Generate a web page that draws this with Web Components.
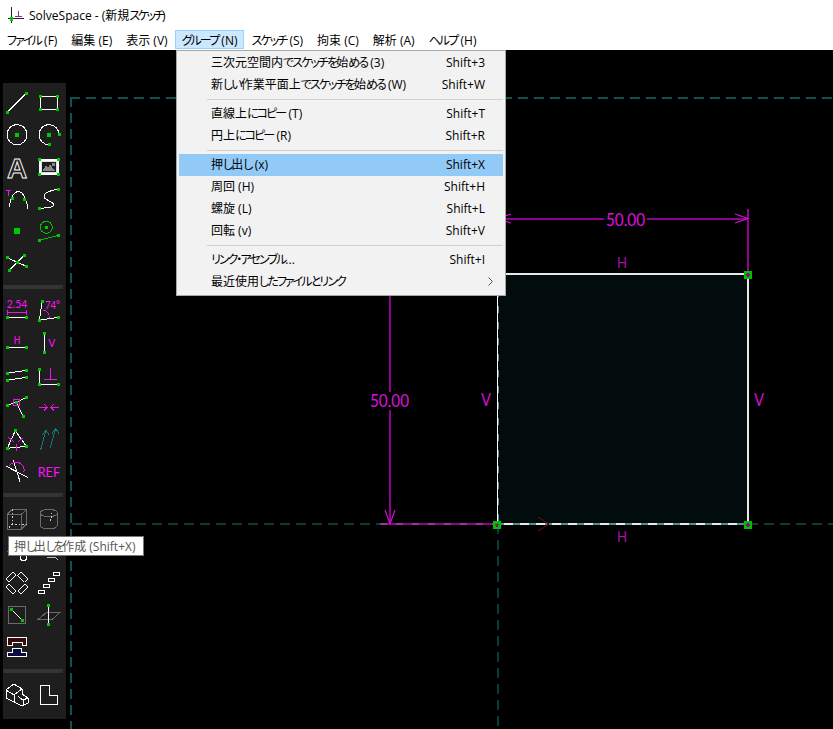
<!DOCTYPE html>
<html lang="ja">
<head>
<meta charset="utf-8">
<title>SolveSpace</title>
<style>
  html, body { margin: 0; height: 100%; background: #000; }
  body { font-family: "Open Sans", "Noto Sans CJK JP", sans-serif; font-size: 12px; }
  /* the reference font has much narrower kana than Noto */
  .k { letter-spacing: -1.9px; }
  .n { letter-spacing: -5.5px; }
  menu-item .n { letter-spacing: -3.4px; }
  title-bar .k, tool-tip .k { letter-spacing: -2.4px; }
</style>
</head>
<body>
<solve-window>
  <title-bar slot="title">SolveSpace - (新規スケッチ)</title-bar>
  <menu-bar slot="menu">
    <menu-item>ファイル (F)</menu-item>
    <menu-item>編集 (E)</menu-item>
    <menu-item>表示 (V)</menu-item>
    <menu-item active>グループ (N)</menu-item>
    <menu-item>スケッチ (S)</menu-item>
    <menu-item>拘束 (C)</menu-item>
    <menu-item>解析 (A)</menu-item>
    <menu-item>ヘルプ (H)</menu-item>
  </menu-bar>
  <sketch-canvas slot="canvas"></sketch-canvas>
  <tool-palette slot="canvas"></tool-palette>
  <tool-tip slot="canvas">押し出しを作成 (Shift+X)</tool-tip>
  <drop-menu slot="canvas">
    <drop-row shortcut="Shift+3">三次元空間内でスケッチを始める (3)</drop-row>
    <drop-row shortcut="Shift+W">新しい作業平面上でスケッチを始める (W)</drop-row>
    <drop-sep></drop-sep>
    <drop-row shortcut="Shift+T">直線上にコピー (T)</drop-row>
    <drop-row shortcut="Shift+R">円上にコピー (R)</drop-row>
    <drop-sep></drop-sep>
    <drop-row shortcut="Shift+X" selected>押し出し (x)</drop-row>
    <drop-row shortcut="Shift+H">周回 (H)</drop-row>
    <drop-row shortcut="Shift+L">螺旋 (L)</drop-row>
    <drop-row shortcut="Shift+V">回転 (v)</drop-row>
    <drop-sep></drop-sep>
    <drop-row shortcut="Shift+I">リンク・アセンブル...</drop-row>
    <drop-row submenu>最近使用したファイルとリンク</drop-row>
  </drop-menu>
</solve-window>

<script>
/********************* Kana width *********************/
const narrowKana = (el) => {
  el.innerHTML = el.textContent.replace(/[ーコピ]+|[\u3040-\u30ff]+/g, (run) => {
    const cls = /^[ーコピ]/.test(run) ? "n" : "k";
    return `<span class="${cls}">${run}</span>`;
  });
};
document.querySelectorAll("title-bar, menu-item, drop-row, tool-tip").forEach(narrowKana);

/********************* Base *********************/
class ShadowEl extends HTMLElement {
  constructor() {
    super();
    this.attachShadow({ mode: "open" });
  }
  connectedCallback() {
    this.shadowRoot.innerHTML = this.render();
  }
}

/********************* Window *********************/
class SolveWindow extends ShadowEl {
  render() {
    return `
    <style>
      :host { display: flex; flex-direction: column; width: 833px; height: 729px; overflow: hidden; }
      .canvas { position: relative; flex: 1; background: #000; }
    </style>
    <slot name="title"></slot>
    <slot name="menu"></slot>
    <div class="canvas"><slot name="canvas"></slot></div>`;
  }
}

class TitleBar extends ShadowEl {
  render() {
    return `
    <style>
      :host {
        display: flex; align-items: center; gap: 5px; height: 30px; padding-left: 8px;
        background: #fff; color: #000; font-feature-settings: "palt";
      }
      svg { display: block; width: 16px; height: 18px; }
    </style>
    <svg viewBox="0 0 16 18" shape-rendering="crispEdges">
      <path d="M3.5 1V17M0 12.5H16" stroke="#222" fill="none"/>
      <path d="M10.5 5V10.5M7 10.5H14" stroke="#a020a0" fill="none"/>
      <rect x="1.5" y="11" width="3.5" height="3.5" fill="#0c0"/>
    </svg>
    <span><slot></slot></span>`;
  }
}

class MenuBar extends ShadowEl {
  render() {
    return `
    <style>
      :host { display: flex; height: 20px; background: #fff; font-feature-settings: "palt"; }
    </style>
    <slot></slot>`;
  }
}

class MenuItem extends ShadowEl {
  render() {
    return `
    <style>
      :host {
        display: flex; align-items: center; box-sizing: border-box; height: 19px;
        padding: 0 7px; border: 1px solid transparent; border-width: 1px 0; color: #000;
      }
      :host([active]) { background: #cce8ff; border: 1px solid #99d1ff; padding: 0 6px; }
    </style>
    <span><slot></slot></span>`;
  }
}

/********************* Drop down menu *********************/
class DropMenu extends ShadowEl {
  render() {
    return `
    <style>
      :host {
        position: absolute; left: 176px; top: 0; box-sizing: border-box; width: 330px; height: 246px;
        display: block; padding: 1px 2px 2px; background: #f2f2f2; border: 1px solid #a8a8a8;
        color: #000; font-feature-settings: "palt";
      }
    </style>
    <slot></slot>`;
  }
}

class DropRow extends ShadowEl {
  render() {
    const shortcut = this.getAttribute("shortcut") || "";
    const chevron = this.hasAttribute("submenu")
      ? `<svg class="chevron" width="5" height="9" viewBox="0 0 5 9"><path d="M.5 .5L4.5 4.5L.5 8.5" fill="none" stroke="#555"/></svg>`
      : "";
    return `
    <style>
      :host {
        display: flex; align-items: center; justify-content: space-between; box-sizing: border-box;
        position: relative; height: 22px; padding: 0 18px 2px 32px;
      }
      :host([selected]) { background: #91c9f7; }
      .chevron { position: absolute; right: 10px; top: 6px; }
    </style>
    <span><slot></slot></span><span>${shortcut}</span>${chevron}`;
  }
}

class DropSep extends ShadowEl {
  render() {
    return `
    <style>
      :host { display: flex; align-items: center; height: 7px; padding-left: 28px; }
      div { flex: 1; height: 1px; background: #d0d0d0; }
    </style>
    <div></div>`;
  }
}

class ToolTip extends ShadowEl {
  render() {
    return `
    <style>
      :host {
        position: absolute; left: 8px; top: 486px; box-sizing: border-box; width: 136px; height: 20px;
        display: flex; align-items: center; padding-left: 5px; white-space: nowrap;
        background: #fff; border: 1px solid #767676; color: #575757; font-feature-settings: "palt";
      }
    </style>
    <span><slot></slot></span>`;
  }
}

/********************* Sketch *********************/
class SketchCanvas extends ShadowEl {
  render() {
    return `
    <style>
      :host { position: absolute; inset: 0; display: block; }
      svg { display: block; }
      text { font-family: Lato, "Liberation Sans", sans-serif; font-weight: 400; }
      .dim { fill: #e010e0; font-size: 18px; }
      .lab { fill: #a810a8; font-size: 16px; }
      .lab.v { fill: #d010d0; font-size: 18px; }
    </style>
    <svg width="833" height="679" viewBox="0 50 833 679" shape-rendering="crispEdges">
      <!-- workplane -->
      <g fill="none" stroke-width="2" stroke-dasharray="10 6">
        <path d="M70 97.5H833M71 97V729" stroke="#0b5450"/>
        <path d="M72 524H380M748 524H833M498 524V729" stroke="#063c3c"/>
      </g>
      <rect x="497" y="274" width="251" height="250" fill="#020c0d"/>
      <!-- entities -->
      <path d="M497 274H748V524H497" fill="none" stroke="#e8e8e8" stroke-width="2"/>
      <path d="M497.5 274V524" fill="none" stroke="#fff"/>
      <path d="M498.5 274V524" fill="none" stroke="#4a9090" stroke-dasharray="7 9"/>
      <path d="M497 524H748" fill="none" stroke="#4a9090" stroke-width="2" stroke-dasharray="7 9"/>
      <path d="M538 517L549 524L538 531" fill="none" stroke="#5a0c0c"/>
      <!-- dimensions -->
      <g stroke="#8b048b" stroke-width="2" fill="none">
        <path d="M500 218.5H604M647 218.5H748M748 209V274"/>
        <path d="M380 524H497"/>
        <path d="M390 296V392M390 410V524"/>
      </g>
      <path d="M380 524H497" stroke="#9a359a" stroke-width="2" stroke-dasharray="7 9"/>
      <g stroke="#d010d0" stroke-width="1.2" fill="none" shape-rendering="auto">
        <path d="M735 214L748 218.5L735 223M511 214L497 218.5L511 223M385 510L390 524L395 510"/>
      </g>
      <text class="dim" x="606" y="226" textLength="39" lengthAdjust="spacingAndGlyphs">50.00</text>
      <text class="dim" x="370" y="407" textLength="39" lengthAdjust="spacingAndGlyphs">50.00</text>
      <text class="lab" x="617" y="268" textLength="10" lengthAdjust="spacingAndGlyphs">H</text>
      <text class="lab" x="617" y="542" textLength="10" lengthAdjust="spacingAndGlyphs">H</text>
      <text class="lab v" x="481" y="406" textLength="10" lengthAdjust="spacingAndGlyphs">V</text>
      <text class="lab v" x="754" y="406" textLength="10" lengthAdjust="spacingAndGlyphs">V</text>
      <!-- points -->
      <g fill="#00c000">
        <rect x="744" y="271" width="8" height="8"/>
        <rect x="744" y="521" width="8" height="8"/>
        <rect x="493" y="521" width="8" height="8"/>
      </g>
      <g fill="#8b048b">
        <path d="M746 274H750V276H746ZM747 273H749V277H747Z"/>
        <path d="M746 524H750V526H746ZM747 523H749V527H747Z"/>
        <path d="M495 524H499V525H495ZM496 525H498V527H496Z"/>
      </g>
    </svg>`;
  }
}

/********************* Tool palette *********************/
const pt = (x, y, s = 3) => `<rect x="${x - s / 2}" y="${y - s / 2}" width="${s}" height="${s}" fill="#00c800" stroke="none"/>`;
const txt = (x, y, size, len, str) => `<text x="${x}" y="${y}" font-size="${size}" textLength="${len}" lengthAdjust="spacingAndGlyphs" fill="#ff10ff" stroke="none">${str}</text>`;
const mag = (d) => `<path d="${d}" stroke="#f010f0"/>`;

const SECTIONS = [
  [
    `<path d="M4.3 23.3L23.3 4.3"/>${pt(4.3, 23.3)}${pt(23.3, 4.3)}`,
    `<path d="M5.3 7H22.3V20.3H5.3Z"/>${pt(5.3, 7)}${pt(22.3, 7)}${pt(5.3, 20.3)}${pt(22.3, 20.3)}`,
    `<circle cx="14" cy="13.7" r="10"/>${pt(14, 13.7, 4)}`,
    `<path d="M24 13.7A10 10 0 1 0 14.3 23.7"/>${pt(14, 13.7, 4)}${pt(24, 13.7)}${pt(14.3, 23.7)}`,
    `<text x="14" y="24.5" text-anchor="middle" font-size="28" style="font-family:'Liberation Sans',sans-serif;font-weight:700" fill="#1e1e1e" stroke="#fff" stroke-width=".9">A</text>`,
    `<path d="M4.8 6.8H22.8V20.8H4.8Z" stroke-width="1.5"/><path d="M6.5 8.5H21V19H6.5Z" stroke="#ddd"/><path d="M7.5 18L11 12L13 15L15 11L20 18Z" fill="#888" stroke="none"/><rect x="17" y="9.5" width="3" height="3" fill="#888" stroke="none"/>${pt(4.3, 6.3)}${pt(23.3, 6.3)}${pt(4.3, 21.3)}${pt(23.3, 21.3)}`,
    `<path d="M6 22.3C7.5 14 10 6.7 15.3 6.7C20.5 6.7 23.5 15 25 24.3"/>${pt(9.3, 13.3)}${pt(21.3, 14.3)}<path d="M3 5.5H8M5.5 5.5V10.5" stroke="#f010f0"/>`,
    `<path d="M4.3 23.3C10 23 19 23 18.5 19.5C18 16 8 15 9 11C10 6 18 5 23.3 4.3"/>${pt(4.3, 23.3)}${pt(23.3, 4.3)}`,
    `${pt(14, 13.7, 6)}`,
    `<circle cx="11.3" cy="10.3" r="6" stroke="#00c000"/><path d="M4.3 23.3L23.3 18.3" stroke="#00c000"/>${pt(11.3, 10.3)}${pt(4.3, 23.3)}${pt(23.3, 18.3)}`,
    `<path d="M4.3 8.7L23.3 17.3M6.3 21.3L21.3 6.3"/>${pt(4.3, 8.7)}${pt(23.3, 17.3)}${pt(6.3, 21.3)}${pt(21.3, 6.3)}${pt(14.3, 13.7)}`,
    ``,
  ],
  [
    `${txt(3.7, 11, 10.5, 20.5, "2.54")}${mag("M4.3 15.3H23.3M4.3 12.5V18M23.3 12.5V18")}<path d="M4.3 20.3H23.3"/>${pt(4.3, 20.3)}${pt(23.3, 20.3)}`,
    `${txt(10, 11.5, 10.5, 15, "74°")}<path d="M7.3 4L4.3 23.3L23.3 20.3"/>${mag("M8.3 13C12 13.5 14.5 17 14.3 21.3")}${pt(7.3, 4)}${pt(4.3, 23.3)}${pt(23.3, 20.3)}`,
    `${txt(10.8, 15, 11, 6.6, "H")}<path d="M4.3 18.3H23.3"/>${pt(4.3, 18.3)}${pt(23.3, 18.3)}`,
    `${txt(13.2, 17.7, 12, 7, "V")}<path d="M9.3 4.3V23.3"/>${pt(9.3, 4.3)}${pt(9.3, 23.3)}`,
    `<path d="M4.3 12.3L23.3 9.3M4.3 19.3L23.3 16.3"/>${pt(4.3, 12.3)}${pt(23.3, 9.3)}${pt(4.3, 19.3)}${pt(23.3, 16.3)}`,
    `<path d="M4.3 8.3V23.3H23.3"/>${mag("M15.7 7.3V18.3M9.3 18.3H22.3")}${pt(4.3, 8.3)}${pt(4.3, 23.3)}${pt(23.3, 23.3)}`,
    `<path d="M4.3 12.3L13.3 9.3L23.3 4.3M13.3 9.3L20.3 23.3"/>${mag("M10.3 6.3H16.3V12.3H10.3Z")}${pt(4.3, 12.3)}${pt(23.3, 4.3)}${pt(20.3, 23.3)}${pt(13.3, 9.3)}`,
    `${mag("M4.3 14.3H12.3M9 11L12.3 14.3L9 17.6M24 14.3H16M19.3 11L16 14.3L19.3 17.6")}`,
    `<path d="M12.3 5.7L4.3 23.3L23.3 21.3Z"/>${mag("M5.5 12.5L11 16.5M15 16.5L20.5 12.5M13.8 19V25.5")}${pt(12.3, 5.7)}${pt(4.3, 23.3)}${pt(23.3, 21.3)}`,
    `<path d="M5.7 24.7L11 5M7.5 10L11 5L14 10M15 23.3L20.7 3.3M17 8.5L20.7 3.3L24 8.5" stroke="#0f7a78"/>`,
    `<path d="M3 9L25 20.7M10.3 3L17 24.7"/>${mag("M6.3 9A8 8 0 0 1 21 14.7")}`,
    `${txt(2.7, 19.7, 14, 22.4, "REF")}`,
  ],
  [
    `<path d="M4.3 9H18.7V24H4.3ZM4.3 9L9.5 4.3H23.7V19L18.7 24M18.7 9L23.7 4.3" stroke="#6a6a6a"/><path d="M9.5 4.3V19H23.7M9.5 19L4.3 24" stroke="#d0d0d0" stroke-dasharray="1.5 2"/>`,
    `<ellipse cx="13.7" cy="8" rx="8.7" ry="3.7" stroke="#6a6a6a"/><path d="M5 8V20.3C5 22.4 9 24 13.7 24C18.4 24 22.3 22.4 22.3 20.3V8" stroke="#6a6a6a"/><path d="M16 8C19 10 15 14 14.5 18" stroke="#d0d0d0" stroke-dasharray="1.5 2"/>`,
    `<circle cx="20.5" cy="20.5" r="3"/><path d="M4 14H7" stroke="#6a6a6a"/>`,
    `<path d="M12 20H20L23 23M23 14V18" stroke="#bbb"/>`,
    `<g transform="translate(8 8.3) rotate(-45)"><rect x="-5" y="-2.2" width="10" height="4.4"/></g><g transform="translate(19.7 8.3) rotate(45)"><rect x="-5" y="-2.2" width="10" height="4.4"/></g><g transform="translate(8 20) rotate(45)"><rect x="-5" y="-2.2" width="10" height="4.4"/></g><g transform="translate(19.7 20) rotate(-45)"><rect x="-5" y="-2.2" width="10" height="4.4"/></g>`,
    `<path d="M3 21.3H9.7V24.7H3ZM8.3 15.3H14.3V18.7H8.3ZM13.3 9.3H19.3V12.7H13.3ZM18.3 3.3H24.7V6.7H18.3Z"/>`,
    `<path d="M5.3 5.3H22.7V22.3H5.3Z" stroke="#6a6a6a"/><path d="M8.3 8.3L19.7 19.7"/>${pt(8.3, 8.3)}${pt(19.7, 19.7)}`,
    `<path d="M3.3 18.3L11.7 11.3H25L17.3 18.3Z" stroke="#6a6a6a"/><path d="M13.3 4.3V23.3"/>${pt(13.3, 4.3)}${pt(13.3, 23.3)}`,
    `<path d="M4.3 12.7V4.3H23.7V12.7H19V9H9V12.7Z" fill="#3c0808"/><path d="M4.3 23.7V19.5H9.5V15.3H18.5V19.5H23.7V23.7Z" fill="#0a0a40"/>`,
    ``,
  ],
  [
    `<path d="M3 9L11 3L19 8V13L25 17V22L19 25L3 17ZM3 9L11 14L19 8M11 14V21M15 15.5L20 19L25 17M20 19V25"/>`,
    `<path d="M5.3 4.7H14.3V14.7H22.7V23.7H5.3Z"/>`,
  ],
];

class ToolPalette extends ShadowEl {
  render() {
    const cell = (icon) => `<svg viewBox="0 0 28 28" width="28" height="28" fill="none" stroke="#fff" overflow="visible" shape-rendering="crispEdges">${icon}</svg>`;
    const groups = SECTIONS.map((icons) => `<div class="grid">${icons.map(cell).join("")}</div>`);
    return `
    <style>
      :host {
        position: absolute; left: 3px; top: 33px; display: flex; flex-direction: column;
        box-sizing: border-box; width: 63px; height: 636px; padding: 6px 3px 10px 0; background: #1e1e1e;
      }
      .grid { display: grid; grid-template-columns: 28px 28px; column-gap: 4px; row-gap: 4px; }
      .sep { height: 4px; margin: 8px 0; background: #333; }
      svg { display: block; }
      text { font-family: Lato, "Liberation Sans", sans-serif; font-weight: 400; }
    </style>
    ${groups.join('<div class="sep"></div>')}`;
  }
}

/********************* Define *********************/
window.customElements.define("solve-window", SolveWindow);
window.customElements.define("title-bar", TitleBar);
window.customElements.define("menu-bar", MenuBar);
window.customElements.define("menu-item", MenuItem);
window.customElements.define("drop-menu", DropMenu);
window.customElements.define("drop-row", DropRow);
window.customElements.define("drop-sep", DropSep);
window.customElements.define("tool-tip", ToolTip);
window.customElements.define("sketch-canvas", SketchCanvas);
window.customElements.define("tool-palette", ToolPalette);
</script>
</body>
</html>
